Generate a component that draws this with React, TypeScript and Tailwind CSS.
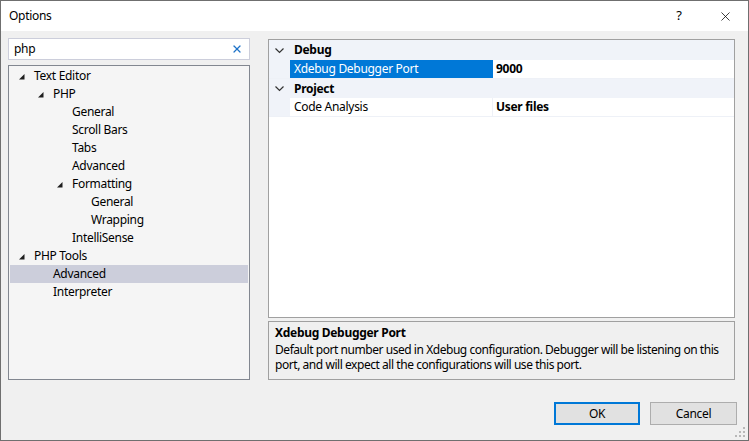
import { X } from "lucide-react";

type Node = { label: string; level: number; expanded?: boolean; selected?: boolean };

const tree: Node[] = [
  { label: "Text Editor", level: 0, expanded: true },
  { label: "PHP", level: 1, expanded: true },
  { label: "General", level: 2 },
  { label: "Scroll Bars", level: 2 },
  { label: "Tabs", level: 2 },
  { label: "Advanced", level: 2 },
  { label: "Formatting", level: 2, expanded: true },
  { label: "General", level: 3 },
  { label: "Wrapping", level: 3 },
  { label: "IntelliSense", level: 2 },
  { label: "PHP Tools", level: 0, expanded: true },
  { label: "Advanced", level: 1, selected: true },
  { label: "Interpreter", level: 1 },
];

const indent = ["pl-[24px]", "pl-[43px]", "pl-[62px]", "pl-[81px]"];

function Triangle() {
  return (
    <svg width="6" height="6" viewBox="0 0 6 6" className="absolute -left-[15px] top-[7px]">
      <polygon points="5.5,0 5.5,5.5 0,5.5" fill="#1e1e1e" />
    </svg>
  );
}

function Chevron() {
  return (
    <svg width="9" height="6" viewBox="0 0 9 6">
      <path d="M0.5 0.5 L4.5 4.5 L8.5 0.5" fill="none" stroke="#333" strokeWidth="1.2" />
    </svg>
  );
}

function Grip() {
  const dots = [
    [8, 0], [8, 4], [4, 4], [8, 8], [4, 8], [0, 8],
  ];
  return (
    <svg width="10" height="10" viewBox="0 0 10 10" className="absolute right-[3px] bottom-[3px]">
      {dots.map(([x, y], i) => (
        <rect key={i} x={x} y={y} width="2" height="2" fill="#b8b8b8" />
      ))}
    </svg>
  );
}

export default function App() {
  return (
    <div
      className="w-[749px] h-[441px] border border-[#6f6f6f] flex flex-col text-[12px] tracking-[-0.3px] text-black overflow-hidden"
      style={{ fontFamily: '"Noto Sans", "Open Sans", sans-serif' }}
    >
      {/* Title bar */}
      <div className="h-[30px] bg-white flex items-center justify-between pl-[8px]">
        <span className="text-[12px]">Options</span>
        <div className="flex items-center">
          <span className="w-[46px] text-center text-[13px]">?</span>
          <span className="w-[46px] flex justify-center">
            <X size={15} strokeWidth={1.2} />
          </span>
        </div>
      </div>

      {/* Body */}
      <div className="relative flex-1 bg-[#f0f0f0] flex flex-col pt-[7px]">
        <div className="flex pl-[7px]">
          {/* Left column */}
          <div className="w-[242px] flex flex-col gap-[5px]">
            <div className="h-[22px] bg-white border border-[#cccedb] flex items-center justify-between pl-[5px] pr-[6px]">
              <span>php</span>
              <X size={12} strokeWidth={2.4} className="text-[#1e73c8]" />
            </div>
            <div className="h-[315px] bg-[#f5f5f5] border border-[#828790] p-px">
              {tree.map((n, i) => (
                <div
                  key={i}
                  className={`h-[18px] flex items-center ${indent[n.level]} ${n.selected ? "bg-[#cccedb]" : ""}`}
                >
                  <span className="relative leading-[18px]">
                    {n.expanded && <Triangle />}
                    {n.label}
                  </span>
                </div>
              ))}
            </div>
          </div>

          {/* Right column */}
          <div className="w-[467px] ml-[18px] mt-px flex flex-col gap-[3px]">
            <div className="h-[279px] bg-white border border-[#a0a0a0] flex flex-col">
              <div className="h-[20px] bg-[#f0f3f9] flex items-center">
                <span className="w-[21px] flex justify-center pt-px"><Chevron /></span>
                <span className="pl-[4px] font-bold">Debug</span>
              </div>
              <div className="h-[19px] flex border-b border-[#eef1f7]">
                <span className="w-[21px] bg-[#f0f3f9]" />
                <span className="w-[203px] bg-[#0078d7] text-white pl-[4px] leading-[18px]">Xdebug Debugger Port</span>
                <span className="flex-1 pl-[3px] font-bold leading-[18px]">9000</span>
              </div>
              <div className="h-[19px] bg-[#f0f3f9] flex items-center">
                <span className="w-[21px] flex justify-center pt-px"><Chevron /></span>
                <span className="pl-[4px] font-bold">Project</span>
              </div>
              <div className="h-[19px] flex border-b border-[#eef1f7]">
                <span className="w-[21px] bg-[#f0f3f9]" />
                <span className="w-[203px] pl-[4px] leading-[18px] border-r border-[#eef1f7]">Code Analysis</span>
                <span className="flex-1 pl-[3px] font-bold leading-[18px]">User files</span>
              </div>
            </div>
            <div className="h-[59px] border border-[#a0a0a0] pl-[6px] pr-[2px] pt-[3px] leading-[15px]">
              <div className="font-bold mb-[2px]">Xdebug Debugger Port</div>
              <div className="tracking-[-0.45px]">
                Default port number used in Xdebug configuration. Debugger will be listening on this port, and will expect all the configurations will use this port.
              </div>
            </div>
          </div>
        </div>

        {/* Buttons */}
        <div className="flex justify-end gap-[10px] pr-[11px] mt-[22px]">
          <button className="w-[86px] h-[23px] bg-[#e1e1e1] border-2 border-[#0078d7]">OK</button>
          <button className="w-[87px] h-[23px] bg-[#e1e1e1] border border-[#adadad]">Cancel</button>
        </div>
        <Grip />
      </div>
    </div>
  );
}
